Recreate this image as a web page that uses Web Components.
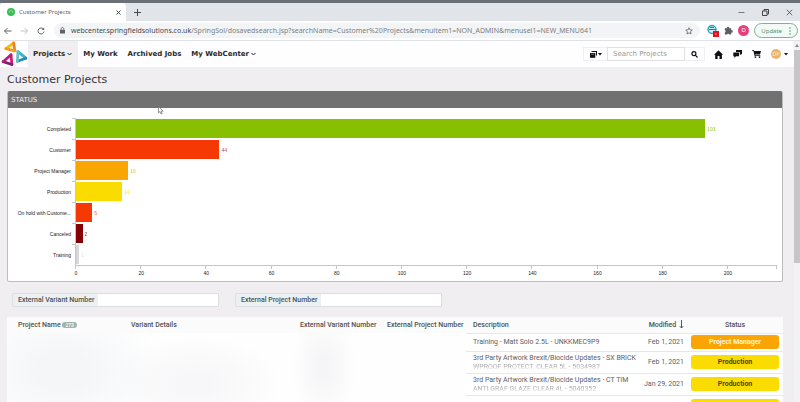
<!DOCTYPE html>
<html lang="en">
<head>
<meta charset="utf-8">
<title>Customer Projects</title>
<style>
html, body { margin: 0; height: 100%; }
body { background: #f1eef2; color: #333; overflow: hidden; font-family: "DejaVu Sans", sans-serif; font-size: 7px; }
</style>
</head>
<body>
<web-center></web-center>

<script>
function define(name, css, html, setup) {
  const tpl = document.createElement('template');
  tpl.innerHTML = `<style>*{box-sizing:border-box}button,input{font:inherit;color:inherit;margin:0}button{border:0;background:none;padding:0}svg{display:block}${css}</style>${html}`;
  customElements.define(name, class extends HTMLElement {
    constructor() {
      super();
      this.attachShadow({ mode: 'open' }).append(tpl.content.cloneNode(true));
    }
    connectedCallback() { if (setup) setup(this, this.shadowRoot); }
  });
}

/* One category of the bar chart */
define('chart-bar', `
:host { display: grid; grid-template-columns: 67px 1fr; height: 21px; }
.label { align-self: center; text-align: right; padding-right: 4px; color: #222; white-space: nowrap; }
.track { display: flex; align-items: center; border-left: 1px solid #c5c5c5; position: relative; }
.track::before { content: ""; position: absolute; left: -4px; top: 0; width: 4px; height: 1px; background: #c5c5c5; }
.fill { height: 19px; width: var(--size); background: var(--tone); }
.value { margin-left: 2px; color: var(--ink, var(--tone)); opacity: .8; }
`, `<span class="label"><slot></slot></span><div class="track"><div class="fill"></div><span class="value"></span></div>`,
(el, root) => {
  const v = Number(el.getAttribute('value'));
  el.style.setProperty('--size', (v / 215 * 100) + '%');
  root.querySelector('.value').textContent = v;
});

define('chart-axis', `
:host { display: flex; margin-left: 67px; border-top: 1px solid #c5c5c5; height: 13px; }
.step { flex: 20 1 0; display: flex; flex-direction: column; border-left: 1px solid #c5c5c5; height: 3px; }
.step.end { flex-grow: 15; border-right: 1px solid #c5c5c5; }
.step span { width: 0; display: flex; justify-content: center; padding-top: 3px; color: #222; }
`, ``, (el, root) => {
  for (let n = 0; n <= 200; n += 20) {
    const step = document.createElement('div');
    step.className = n === 200 ? 'step end' : 'step';
    const text = document.createElement('span');
    text.textContent = n;
    step.append(text);
    root.append(step);
  }
});

define('status-panel', `
:host { display: block; border: 1px solid #bdbdbf; border-top: 0; border-radius: 2px; background: #fff; overflow: hidden; }
h2 { margin: 0 -1px; padding-left: 4px; height: 17px; line-height: 18px; background: #717171; color: #eee; font-size: 7px; font-weight: 400; }
.chart { padding: 10px 5px 3px 0; font: 5px/8px "Liberation Sans", Arial, sans-serif; }
`, `<h2>STATUS</h2>
<div class="chart">
<chart-bar value="193" style="--tone:#86c000">Completed</chart-bar>
<chart-bar value="44" style="--tone:#f63805;--ink:#b02020">Customer</chart-bar>
<chart-bar value="16" style="--tone:#f9a603">Project Manager</chart-bar>
<chart-bar value="14" style="--tone:#fbdc00">Production</chart-bar>
<chart-bar value="5" style="--tone:#f63805">On hold with Custome...</chart-bar>
<chart-bar value="2" style="--tone:#860005">Canceled</chart-bar>
<chart-bar value="1" style="--tone:#d8d8d8">Training</chart-bar>
<chart-axis></chart-axis>
</div>`);

define('filter-field', `
:host { display: flex; width: 207px; height: 14px; border: 1px solid #dcdfe1; border-radius: 1px; font: 500 7px/12px Roboto, sans-serif; background: #fff; }
label { flex: 0 0 85px; padding-left: 5px; background: #edf0f2; color: #4a5354; white-space: nowrap; }
input { flex: 1; min-width: 0; border: 0; padding: 0 4px; background: #fff; outline: 0; }
`, `<label for="f"><slot></slot></label><input id="f" type="text">`);

define('status-badge', `
:host { display: block; height: 14px; border-radius: 3px; background: #fbdc00; color: #4d4816; font-weight: 700; line-height: 14px; text-align: center; }
:host([kind="manager"]) { background: #fba505; color: #fff3d8; }
`, `<slot></slot>`);

define('project-table', `
:host { display: block; background: #fff; font: 7px/9px Roboto, sans-serif; color: #606060; }
table { width: 100%; border-collapse: collapse; table-layout: fixed; }
th { height: 16px; padding: 3px 0 0; background: #fbfbfb; text-align: left; font-weight: 500; color: #505050; white-space: nowrap; vertical-align: baseline; }
th:first-child { padding-left: 11px; }
td { padding: 0 0 0 7px; height: 22px; border-top: 1px solid #e8e8ea; vertical-align: middle; }
tr:first-child td { height: 18px; }
.c1 { width: 124px; } .c3 { width: 87px; } .c4 { width: 79px; } .c5 { width: 177px; } .c6 { width: 41px; } .c7 { width: 99px; }
th.desc { padding-left: 7px; }
.count { display: inline-block; padding: 0 3px; border-radius: 3px; background: #a0b5ad; color: #fff; font-size: 5px; line-height: 6px; }
td.date, th.date { padding-left: 0; text-align: right; white-space: nowrap; }
th.date svg { display: inline-block; vertical-align: -2px; margin-left: 1px; }
td.state { padding: 0 4px 0 7px; }
th.state { padding-left: 7px; padding-right: 4px; text-align: center; }
.text { white-space: nowrap; line-height: 9px; }
.text small { display: block; font-size: inherit; line-height: 8px; color: #aaa; -webkit-mask-image: linear-gradient(#000 40%, transparent 90%); mask-image: linear-gradient(#000 40%, transparent 90%); }
td.veil { padding: 0; border-top: 0; background:
  radial-gradient(ellipse 130px 90px at 12% 45%, #f4f6f8 20%, transparent 75%),
  radial-gradient(ellipse 110px 60px at 41% 60%, #f7f6f8 10%, transparent 80%),
  radial-gradient(ellipse 40px 70px at 69% 40%, #f5f5f7 10%, transparent 80%), #fefefe; }
`, `<table>
<colgroup><col class="c1"><col><col class="c3"><col class="c4"><col class="c5"><col class="c6"><col class="c7"></colgroup>
<thead><tr><th>Project Name <span class="count">273</span></th><th>Variant Details</th><th>External Variant Number</th><th>External Project Number</th><th class="desc">Description</th>
<th class="date">Modified <svg width="5" height="9" viewBox="0 0 5 9" fill="none" stroke="#444" stroke-width=".9"><path d="M2.5 0v8M.8 6.2l1.7 1.8 1.7-1.8"/></svg></th><th class="state">Status</th></tr></thead>
<tbody>
<tr><td class="veil" colspan="4" rowspan="4"></td><td><div class="text">Training - Matt Solo 2.5L - UNKKMEC9P9</div></td><td class="date">Feb 1, 2021</td><td class="state"><status-badge kind="manager">Project Manager</status-badge></td></tr>
<tr><td><div class="text">3rd Party Artwork Brexit/Biocide Updates - SX BRICK<small>WPROOF PROTECT. CLEAR 5L - 5034987</small></div></td><td class="date">Feb 1, 2021</td><td class="state"><status-badge>Production</status-badge></td></tr>
<tr><td><div class="text">3rd Party Artwork Brexit/Biocide Updates - CT TIM<small>ANTI GRAF GLAZE CLEAR 4L - 5040352</small></div></td><td class="date">Jan 29, 2021</td><td class="state"><status-badge>Production</status-badge></td></tr>
<tr><td><div class="text">3rd Party Artwork Brexit/Biocide Updates - CT TIM</div></td><td class="date"></td><td class="state"><status-badge>Production</status-badge></td></tr>
</tbody></table>`);

define('browser-frame', `
:host { display: block; font-family: "Noto Sans", sans-serif; color: #5f6368; border-top: 3px solid #6b7076; }
.tabs { display: flex; align-items: center; height: 18px; background: #e1e5e9; }
.tab { display: flex; align-items: center; flex: 0 1 126px; align-self: stretch; padding: 0 5px 0 7px; gap: 4px; background: #fff; border-radius: 4px 4px 0 0; font-size: 6px; }
.tab span { flex: 1; }
.plus { margin-left: 8px; }
.win { display: flex; gap: 17px; margin-left: auto; padding-right: 7px; }
.bar { display: flex; align-items: center; height: 20px; background: #fff; border-bottom: 1px solid #dfe1e4; padding: 0 2px 0 3px; }
.nav { display: flex; gap: 8px; margin-right: 9px; }
.url { display: flex; align-items: center; flex: 1; height: 15px; border-radius: 8px; background: #f3f4f6; padding: 0 7px 0 6px; gap: 6px; }
.url a { flex: 1; color: #7b7f83; text-decoration: none; font-size: 7px; white-space: nowrap; }
.url b { font-weight: 400; color: #45494d; }
.tools { display: flex; align-items: center; gap: 5px; margin-left: 7px; }
.me { width: 11px; height: 11px; border-radius: 50%; background: #e83e7c; color: #fff; font-size: 6px; line-height: 11px; text-align: center; }
.update { display: flex; align-items: center; gap: 7px; height: 15px; padding: 0 6px; border: 1px solid #7faf94; border-radius: 8px; background: #f2faf6; color: #55906f; font-size: 6px; }
`, `
<div class="tabs">
 <div class="tab"><svg width="8" height="8" viewBox="0 0 8 8"><circle cx="4" cy="4" r="4" fill="#37bd53"/><path d="M2.4 4.7a1.7 1.7 0 1 1 3.2 0" fill="none" stroke="#9be5a9" stroke-width=".9"/></svg><span>Customer Projects</span>
 <button aria-label="Close tab"><svg width="5" height="5" viewBox="0 0 5 5" stroke="#44484c"><path d="M.5.5l4 4M4.5.5l-4 4"/></svg></button></div>
 <button class="plus" aria-label="New tab"><svg width="7" height="7" viewBox="0 0 7 7" stroke="#44484c"><path d="M3.5 0v7M0 3.5h7"/></svg></button>
 <div class="win">
  <button aria-label="Minimize"><svg width="7" height="7" viewBox="0 0 7 7" stroke="#777"><path d="M.5 3.5h6"/></svg></button>
  <button aria-label="Restore"><svg width="7" height="7" viewBox="0 0 7 7" fill="none" stroke="#444"><path d="M.5 2h4.500v4.500h-4.500zM2 2V.5h4.500V5H5"/></svg></button>
  <button aria-label="Close"><svg width="7" height="7" viewBox="0 0 7 7" stroke="#444" stroke-width=".8"><path d="M.8.8l5.400 5.400M6.200.8L.8 6.200"/></svg></button>
 </div>
</div>
<div class="bar">
 <div class="nav">
  <button aria-label="Back"><svg width="9" height="8" viewBox="0 0 9 8" fill="none" stroke="#5f6368"><path d="M8.500 4H1.500M4.500 1l-3 3 3 3"/></svg></button>
  <button aria-label="Forward"><svg width="9" height="8" viewBox="0 0 9 8" fill="none" stroke="#c3c5c8"><path d="M.5 4h7M4.500 1l3 3-3 3"/></svg></button>
  <button aria-label="Reload"><svg width="8" height="8" viewBox="0 0 8 8" fill="none" stroke="#5f6368"><path d="M6.500 2.200A3 3 0 1 0 7 4.600"/><path d="M7.200.5v2.600H4.600" fill="#5f6368" stroke="none"/></svg></button>
 </div>
 <div class="url"><svg width="5" height="7" viewBox="0 0 5 7"><path d="M0 2.800h5V6.500H0z" fill="#5f6368"/><path d="M1.200 3V1.800a1.300 1.300 0 0 1 2.600 0V3" fill="none" stroke="#5f6368" stroke-width=".8"/></svg>
  <a href="#"><b>webcenter.springfieldsolutions.co.uk</b>/SpringSol/dosavedsearch.jsp?searchName=Customer%20Projects&amp;menuitem1=NON_ADMIN&amp;menusel1=NEW_MENU641</a>
  <button aria-label="Bookmark"><svg width="8" height="8" viewBox="0 0 8 8" fill="none" stroke="#5f6368" stroke-width=".8"><path d="M4 .7l.95 2.150 2.350.25L5.550 4.700l.5 2.300L4 5.800 1.950 7l.5-2.300L.7 3.100l2.350-.25z"/></svg></button></div>
 <div class="tools">
  <svg width="12" height="13" viewBox="0 0 12 13"><circle cx="5" cy="5.500" r="4" fill="#cdeef5" stroke="#2aa5c4" stroke-width="1.400"/><path d="M2 5.500h7M3 3.500h4" stroke="#2278a0"/><path d="M6 7h6v6H6z" fill="#e3121e"/><path d="M8 10h2" stroke="#ff9aa0"/></svg>
  <svg width="9" height="9" viewBox="0 0 9 9" fill="#5b5f63"><path d="M.8 2.200h2.100a1.200 1.200 0 1 1 2.300 0h2v2.100a1.200 1.200 0 1 1 0 2.300v2H5.300a1.200 1.200 0 0 0-2.300 0H.8V6.500a1.150 1.150 0 0 0 0-2.200z"/></svg>
  <div class="me">D</div>
  <button class="update">Update <svg width="2" height="8" viewBox="0 0 2 8" fill="#5a8f70"><circle cx="1" cy="1" r=".8"/><circle cx="1" cy="4" r=".8"/><circle cx="1" cy="7" r=".8"/></svg></button>
 </div>
</div>`);

define('app-header', `
:host { display: flex; height: 26px; background: #fefdff; color: #2b2b2b; align-items: center; }
.logo { flex: none; margin: 0 1px 0 1px; }
nav { display: flex; align-self: stretch; font-weight: 700; }
nav a { display: flex; align-items: center; gap: 2px; padding: 0 5px; color: #2a2a2a; text-decoration: none; white-space: nowrap; }
nav a.on { background: #f1eef2; padding-right: 6px; }
.search { display: flex; align-items: center; height: 14px; margin-left: auto; border: 1px solid #efeef1; }
.search button { display: flex; align-items: center; justify-content: center; gap: 1px; }
.kind { width: 23px; } .go { width: 19px; }
.search input { width: 78px; height: 14px; padding: 0 5px; border: 1px solid #e0e0e2; background: #fff; outline: 0; }
.search input::placeholder { color: #999; opacity: 1; }
.links { display: flex; align-items: center; gap: 10px; margin: 0 6px 0 9px; }
.links button { display: flex; align-items: center; gap: 3px; }
.who { width: 10px; height: 10px; border-radius: 50%; background: #ecb469; color: #fff1da; font-size: 5px; line-height: 10px; text-align: center; }
`, `
<svg class="logo" width="26" height="26" viewBox="0 0 26 26" fill="none" stroke-linecap="round" stroke-width="2.800">
<path d="M4.900 7.600 12.700 2" stroke="#f5be1c"/><path d="M12.700 2l1.100 7.800" stroke="#ee841c"/><path d="M13.800 9.800 4.900 7.600" stroke="#f39c17"/>
<path d="M10 13.800l.9 9.700" stroke="#d81b72"/><path d="M10.900 23.500 2.100 20.700" stroke="#7d1f78"/><path d="M2.100 20.700 10 13.800" stroke="#b81d73"/>
<path d="M16.900 10.600l8 6.600" stroke="#39b4c8"/><path d="M24.900 17.200l-8.500 3.100" stroke="#2c88b0"/><path d="M16.400 20.300l.5-9.700" stroke="#63c3c9"/></svg>
<nav>
<a class="on" href="#">Projects <svg width="5" height="4" viewBox="0 0 5 4" fill="none" stroke="#222"><path d="M.5 1l2 2 2-2"/></svg></a>
<a href="#">My Work</a><a href="#">Archived Jobs</a>
<a href="#">My WebCenter <svg width="5" height="4" viewBox="0 0 5 4" fill="none" stroke="#222"><path d="M.5 1l2 2 2-2"/></svg></a>
</nav>
<div class="search">
<button class="kind" aria-label="Search type"><svg width="7" height="7" viewBox="0 0 7 7"><path d="M1.500 0H7v4.500H6V1H1.500z" fill="#111"/><path d="M0 2h5.300v4.800H0z" fill="#111"/><path d="M1 3.300h3.300" stroke="#bbb" stroke-width=".6"/></svg><svg width="4" height="3" viewBox="0 0 4 3"><path d="M0 0h4L2 2.500z" fill="#111"/></svg></button>
<input type="text" placeholder="Search Projects" aria-label="Search Projects">
<button class="go" aria-label="Search"><svg width="7" height="7" viewBox="0 0 7 7" fill="none" stroke="#111" stroke-width="1.200"><circle cx="2.900" cy="2.700" r="2"/><path d="M4.300 4.200l2.200 2.300"/></svg></button>
</div>
<div class="links">
<button aria-label="Home"><svg width="9" height="9" viewBox="0 0 9 9" fill="#111"><path d="M4.500.3L9 4.800H7.900V9H5.500V6H3.600v3H1.200V4.800H0z"/></svg></button>
<button aria-label="Messages"><svg width="9" height="8" viewBox="0 0 9 8" fill="#111"><path d="M3 0h6v4.300H7.700L6.800 5.500V2H3z"/><path d="M.3 2.500H6v3.700H3L1.300 8V6.200H.3z"/></svg></button>
<button aria-label="Cart"><svg width="9" height="8" viewBox="0 0 9 8" fill="#111"><path d="M0 0h1.900l.3 1H9L8 4.400H3.100l.2.8h5v.8H2.600L1.400.8H0z"/><circle cx="3.400" cy="7.100" r=".9"/><circle cx="7.500" cy="7.100" r=".9"/></svg></button>
<button aria-label="Account"><span class="who">DP</span><svg width="4" height="3" viewBox="0 0 4 3"><path d="M0 0h4L2 2.500z" fill="#111"/></svg></button>
</div>`);

define('page-scroll', `
:host { display: flex; flex-direction: column; align-items: center; width: 6px; background: #f2f2f4; }
svg { margin: 3px 0; }
.thumb { flex: 0 0 59%; align-self: stretch; background: #c6c6c8; }
`, `<svg width="4" height="3" viewBox="0 0 4 3"><path d="M0 3h4L2 0z" fill="#888"/></svg><div class="thumb"></div>`);

define('web-center', `
:host { display: flex; flex-direction: column; height: 100vh; }
.view { display: flex; flex: 1; min-height: 0; }
.page { flex: 1; min-width: 0; overflow: hidden; }
main { padding: 0 11px 0 7px; }
h1 { margin: 0; height: 24px; line-height: 25px; font-size: 11px; font-weight: 400; color: #333; }
.filters { display: flex; gap: 16px; padding: 11px 5px 10px; }
.pointer { position: absolute; left: 158px; top: 106px; }
`, `
<browser-frame></browser-frame>
<div class="view">
<div class="page">
<app-header></app-header>
<main>
<h1>Customer Projects</h1>
<status-panel></status-panel>
<div class="filters"><filter-field>External Variant Number</filter-field><filter-field>External Project Number</filter-field></div>
<project-table></project-table>
</main>
</div>
<page-scroll></page-scroll>
</div>
<svg class="pointer" width="6" height="9" viewBox="0 0 6 9"><path d="M.5.5v6.300L2 5.500l1 2.500 1.200-.5-1-2.400h2z" fill="#fff" stroke="#666" stroke-width=".7"/></svg>`);
</script>
</body>
</html>
